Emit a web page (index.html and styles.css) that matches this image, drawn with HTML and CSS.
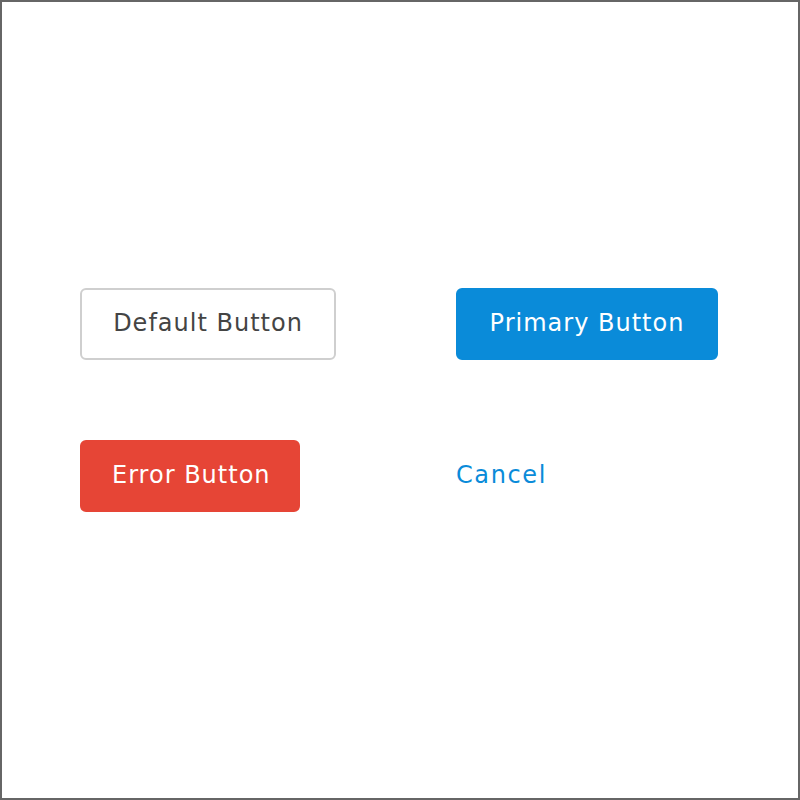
FILE: index.html
```html
<!DOCTYPE html>
<html>
<head>
<meta charset="utf-8">
<link rel="stylesheet" href="styles.css">
</head>
<body>
<div class="frame">
  <div class="grid">
    <button class="btn btn-default">Default Button</button>
    <button class="btn btn-primary">Primary Button</button>
    <button class="btn btn-error">Error Button</button>
    <button class="btn btn-link">Cancel</button>
  </div>
</div>
</body>
</html>
```
FILE: styles.css
```css
html, body {
  margin: 0;
  padding: 0;
  background: #fff;
}
.frame {
  width: 800px;
  height: 800px;
  box-sizing: border-box;
  border: 2px solid #666;
  display: flex;
  align-items: center;
  padding-left: 78px;
}
.grid {
  display: grid;
  grid-template-columns: 256px auto;
  column-gap: 120px;
  row-gap: 80px;
  justify-items: start;
}
.btn {
  font-family: "DejaVu Sans", "Open Sans", sans-serif;
  font-size: 24px;
  letter-spacing: 1px;
  height: 72px;
  box-sizing: border-box;
  padding: 0 30px 2px;
  border-radius: 6px;
  border: 2px solid transparent;
  background: none;
  cursor: pointer;
  white-space: nowrap;
}
.btn-default {
  border-color: #cfcfcf;
  color: #444;
  background: #fff;
  width: 256px;
}
.btn-primary {
  background: #0a8bd9;
  border-color: #0a8bd9;
  color: #fff;
  width: 262px;
}
.btn-error {
  background: #e64536;
  border-color: #e64536;
  color: #fff;
  width: 220px;
}
.btn-link {
  color: #0a8bd9;
  border: 0;
  padding: 0 0 2px;
  letter-spacing: 1.6px;
}
```
